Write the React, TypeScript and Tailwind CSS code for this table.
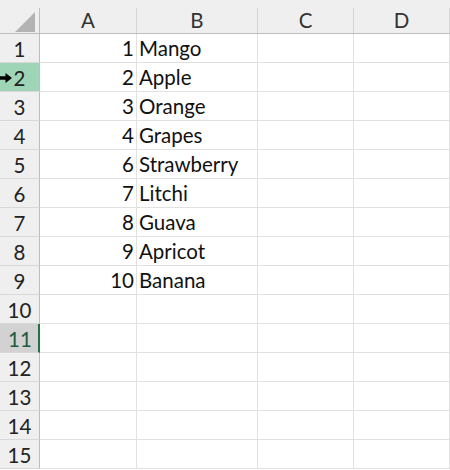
const cols = [
  { key: "A", width: "w-[97px]" },
  { key: "B", width: "w-[121px]" },
  { key: "C", width: "w-[96px]" },
  { key: "D", width: "w-[96px]" },
];

const data: Record<number, [string, string]> = {
  1: ["1", "Mango"],
  2: ["2", "Apple"],
  3: ["3", "Orange"],
  4: ["4", "Grapes"],
  5: ["6", "Strawberry"],
  6: ["7", "Litchi"],
  7: ["8", "Guava"],
  8: ["9", "Apricot"],
  9: ["10", "Banana"],
};

const rows = Array.from({ length: 15 }, (_, i) => i + 1);

function Arrow() {
  return (
    <svg width="12" height="10" viewBox="0 0 12 10" className="absolute left-0 top-[10px]">
      <path d="M0 3.2h5.5V0L12 5 5.5 10V6.8H0z" fill="#000" />
    </svg>
  );
}

function RowHeader({ n }: { n: number }) {
  const bg =
    n === 2 ? "bg-[#9fd5b7]" : n === 11 ? "bg-[#d2d2d2]" : "bg-[#efefef]";
  const text = n === 11 ? "text-[#235c3c]" : "text-[#222]";
  return (
    <div
      className={`relative flex h-[29px] w-[40px] shrink-0 items-end justify-center border-b border-r border-b-[#d8d8d8] pb-[3px] ${
        n === 11 ? "border-r-2 border-r-[#217346]" : "border-r-[#bdbdbd]"
      } ${bg} ${text}`}
    >
      {n === 2 && <Arrow />}
      <span className={n === 11 ? "pl-[2px]" : ""}>{n}</span>
    </div>
  );
}

export default function App() {
  return (
    <div className="h-[470px] w-[450px] overflow-hidden bg-white font-['Lato','Liberation_Sans',sans-serif] text-[20.5px] leading-none">
      {/* column header */}
      <div className="flex h-[34px] border-b border-[#bdbdbd] bg-[#efefef]">
        <div className="relative w-[40px] shrink-0 border-r border-[#bdbdbd] mt-[8px]">
          <svg width="20" height="20" viewBox="0 0 20 20" className="absolute right-[4px] bottom-[1px]">
            <path d="M20 0V20H0z" fill="#b3b3b3" />
          </svg>
        </div>
        {cols.map((c) => (
          <div
            key={c.key}
            className={`${c.width} mt-[8px] flex shrink-0 items-center justify-center border-r border-[#d6d6d6] pb-[1px] text-[#333]`}
          >
            {c.key}
          </div>
        ))}
      </div>
      {rows.map((n) => {
        const d = data[n];
        return (
          <div key={n} className="flex">
            <RowHeader n={n} />
            <div className="flex h-[29px] w-[97px] shrink-0 items-end justify-end border-b border-r border-[#e1e1e1] pb-[4px] pr-[2px] text-[#111]">
              {d?.[0]}
            </div>
            <div className="flex h-[29px] w-[121px] shrink-0 items-end border-b border-r border-[#e1e1e1] pb-[4px] pl-[2px] text-[#111]">
              {d?.[1]}
            </div>
            <div className="h-[29px] w-[96px] shrink-0 border-b border-r border-[#e1e1e1]" />
            <div className="h-[29px] w-[96px] shrink-0 border-b border-r border-[#e1e1e1]" />
          </div>
        );
      })}
    </div>
  );
}
